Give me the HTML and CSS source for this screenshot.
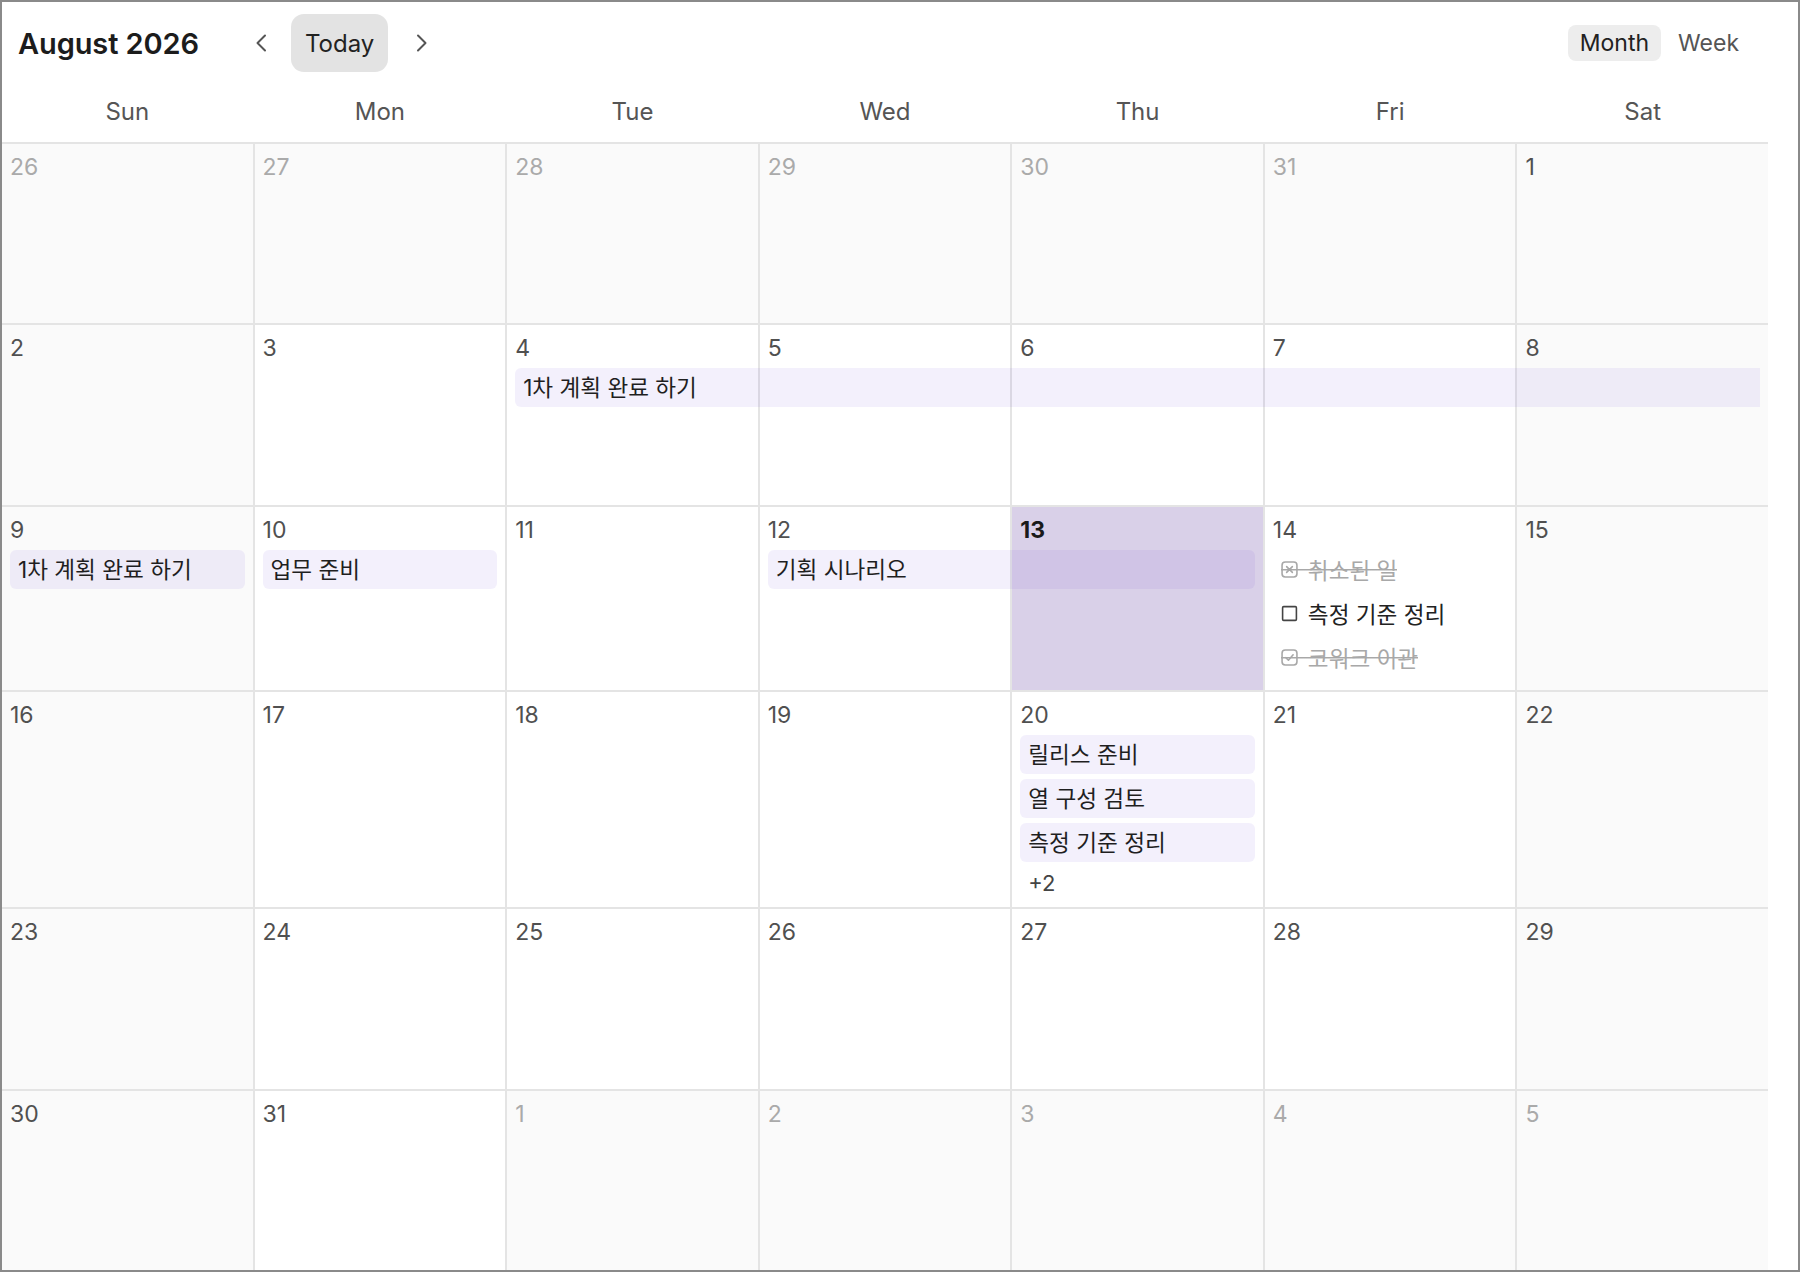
FILE: index.html
```html
<!DOCTYPE html>
<html lang="ko">
<head>
<meta charset="utf-8">
<title>August 2026</title>
<link rel="stylesheet" href="styles.css">
</head>
<body>
<div class="app">
  <header class="toolbar">
    <h1 class="title">August 2026</h1>
    <nav class="nav">
      <button class="icon-btn" aria-label="Previous month">
        <svg width="12" height="18" viewBox="0 0 12 18"><polyline points="10,1.5 2.5,9 10,16.5" fill="none" stroke="#555" stroke-width="2" stroke-linecap="round" stroke-linejoin="round"/></svg>
      </button>
      <button class="today-btn">Today</button>
      <button class="icon-btn" aria-label="Next month">
        <svg width="12" height="18" viewBox="0 0 12 18"><polyline points="2,1.5 9.5,9 2,16.5" fill="none" stroke="#555" stroke-width="2" stroke-linecap="round" stroke-linejoin="round"/></svg>
      </button>
    </nav>
    <div class="views">
      <button class="view active">Month</button>
      <button class="view">Week</button>
    </div>
  </header>

  <div class="calendar">
    <div class="weekdays">
      <div>Sun</div><div>Mon</div><div>Tue</div><div>Wed</div><div>Thu</div><div>Fri</div><div>Sat</div>
    </div>

    <div class="weeks">
      <div class="week">
        <div class="day off"><span class="num">26</span></div>
        <div class="day off"><span class="num">27</span></div>
        <div class="day off"><span class="num">28</span></div>
        <div class="day off"><span class="num">29</span></div>
        <div class="day off"><span class="num">30</span></div>
        <div class="day off"><span class="num">31</span></div>
        <div class="day weekend"><span class="num">1</span></div>
      </div>

      <div class="week">
        <div class="day weekend"><span class="num">2</span></div>
        <div class="day"><span class="num">3</span></div>
        <div class="day"><span class="num">4</span></div>
        <div class="day"><span class="num">5</span></div>
        <div class="day"><span class="num">6</span></div>
        <div class="day"><span class="num">7</span></div>
        <div class="day weekend"><span class="num">8</span></div>
        <div class="event c3 s5 r2 open-end">1차 계획 완료 하기</div>
      </div>

      <div class="week">
        <div class="day weekend"><span class="num">9</span></div>
        <div class="day"><span class="num">10</span></div>
        <div class="day"><span class="num">11</span></div>
        <div class="day"><span class="num">12</span></div>
        <div class="day today"><span class="num">13</span></div>
        <div class="day"><span class="num">14</span></div>
        <div class="day weekend"><span class="num">15</span></div>
        <div class="event c1 r2">1차 계획 완료 하기</div>
        <div class="event c2 r2">업무 준비</div>
        <div class="event c4 s2 r2">기획 시나리오</div>
        <div class="task c6 r2 done">
          <span class="task-line">
            <svg class="box" width="17" height="17" viewBox="0 0 16 16"><rect x="1" y="1" width="14" height="14" rx="3" fill="none" stroke="#a8a8a8" stroke-width="1.5"/><path d="M5.3 5.3 L10.7 10.7 M10.7 5.3 L5.3 10.7" stroke="#a8a8a8" stroke-width="1.5" stroke-linecap="round"/></svg>
            <span class="label">취소된 일</span>
          </span>
        </div>
        <div class="task c6 r3">
          <span class="task-line">
            <svg class="box" width="17" height="17" viewBox="0 0 16 16"><rect x="1.5" y="1.5" width="13" height="13" rx="1" fill="none" stroke="#444" stroke-width="1.5"/></svg>
            <span class="label">측정 기준 정리</span>
          </span>
        </div>
        <div class="task c6 r4 done">
          <span class="task-line">
            <svg class="box" width="17" height="17" viewBox="0 0 16 16"><rect x="1" y="1" width="14" height="14" rx="3" fill="none" stroke="#a8a8a8" stroke-width="1.5"/><path d="M4.6 8.2 L7 10.6 L11.4 5.4" fill="none" stroke="#a8a8a8" stroke-width="1.5" stroke-linecap="round" stroke-linejoin="round"/></svg>
            <span class="label">코워크 이관</span>
          </span>
        </div>
      </div>

      <div class="week">
        <div class="day weekend"><span class="num">16</span></div>
        <div class="day"><span class="num">17</span></div>
        <div class="day"><span class="num">18</span></div>
        <div class="day"><span class="num">19</span></div>
        <div class="day"><span class="num">20</span></div>
        <div class="day"><span class="num">21</span></div>
        <div class="day weekend"><span class="num">22</span></div>
        <div class="event c5 r2">릴리스 준비</div>
        <div class="event c5 r3">열 구성 검토</div>
        <div class="event c5 r4">측정 기준 정리</div>
        <div class="more c5 r5">+2</div>
      </div>

      <div class="week">
        <div class="day weekend"><span class="num">23</span></div>
        <div class="day"><span class="num">24</span></div>
        <div class="day"><span class="num">25</span></div>
        <div class="day"><span class="num">26</span></div>
        <div class="day"><span class="num">27</span></div>
        <div class="day"><span class="num">28</span></div>
        <div class="day weekend"><span class="num">29</span></div>
      </div>

      <div class="week">
        <div class="day weekend"><span class="num">30</span></div>
        <div class="day"><span class="num">31</span></div>
        <div class="day off"><span class="num">1</span></div>
        <div class="day off"><span class="num">2</span></div>
        <div class="day off"><span class="num">3</span></div>
        <div class="day off"><span class="num">4</span></div>
        <div class="day off"><span class="num">5</span></div>
      </div>
    </div>
  </div>
</div>
</body>
</html>
```

FILE: styles.css
```css
* { box-sizing: border-box; }

html, body {
  margin: 0;
  padding: 0;
  background: #fff;
}

body {
  font-family: Inter, "Noto Sans CJK KR", sans-serif;
  color: #222;
}

button {
  font-family: inherit;
  border: 0;
  background: none;
  padding: 0;
  cursor: pointer;
  color: inherit;
}

.app {
  width: 1800px;
  height: 1272px;
  border: 2px solid #8a8a8a;
  display: flex;
  flex-direction: column;
  background: #fff;
}

/* Toolbar */
.toolbar {
  height: 82px;
  flex: none;
  display: flex;
  align-items: center;
  padding: 0 47px 0 16px;
}

.title {
  margin: 0;
  font-size: 29px;
  font-weight: 560;
  letter-spacing: -0.1px;
  color: #1c1c1c;
}

.nav {
  display: flex;
  align-items: center;
  margin-left: 44px;
}

.icon-btn {
  width: 36px;
  height: 40px;
  display: flex;
  align-items: center;
  justify-content: center;
}

.today-btn {
  margin: 0 16px 0 12px;
  height: 58px;
  padding: 0 14px;
  border-radius: 13px;
  background: #e3e3e3;
  font-size: 24px;
  color: #222;
}

.views {
  margin-left: auto;
  display: flex;
  gap: 5px;
}

.view {
  height: 36px;
  padding: 0 12px;
  border-radius: 8px;
  font-size: 23px;
  color: #555;
}

.view.active {
  background: #ededed;
  color: #222;
}

/* Calendar */
.calendar {
  flex: 1;
  display: flex;
  flex-direction: column;
  width: 1766px;
}

.weekdays {
  height: 58px;
  flex: none;
  display: grid;
  grid-template-columns: repeat(7, 1fr);
  column-gap: 2px;
  align-items: center;
  text-align: center;
  font-size: 24px;
  color: #555;
  padding-bottom: 4px;
}

.weeks {
  flex: 1;
  display: flex;
  flex-direction: column;
}

.week {
  flex: 1 1 auto;
  min-height: 181px;
  border-top: 2px solid #e4e4e4;
  background: #e4e4e4;
  display: grid;
  grid-template-columns: repeat(7, 1fr);
  grid-template-rows: 43px repeat(4, auto) minmax(8px, 1fr);
  column-gap: 2px;
}

.day {
  grid-row: 1 / -1;
  background: #fff;
  padding: 9px 8px 8px;
}

.day:nth-child(1) { grid-column: 1; }
.day:nth-child(2) { grid-column: 2; }
.day:nth-child(3) { grid-column: 3; }
.day:nth-child(4) { grid-column: 4; }
.day:nth-child(5) { grid-column: 5; }
.day:nth-child(6) { grid-column: 6; }
.day:nth-child(7) { grid-column: 7; }

.day.weekend,
.day.off {
  background: #fafafa;
}

.day.today {
  background: #d9d0e8;
}

.num {
  display: block;
  font-size: 23px;
  line-height: 28px;
  color: #505050;
}

.day.off .num { color: #aaa; }

.day.today .num {
  font-weight: 700;
  color: #1a1a1a;
}

/* Placement helpers */
.c1 { grid-column-start: 1; }
.c2 { grid-column-start: 2; }
.c3 { grid-column-start: 3; }
.c4 { grid-column-start: 4; }
.c5 { grid-column-start: 5; }
.c6 { grid-column-start: 6; }
.c7 { grid-column-start: 7; }
.s2 { grid-column-end: span 2; }
.s5 { grid-column-end: span 5; }
.r2 { grid-row: 2; }
.r3 { grid-row: 3; }
.r4 { grid-row: 4; }
.r5 { grid-row: 5; }

.event {
  height: 39px;
  margin: 0 8px 5px;
  padding: 0 8px;
  border-radius: 6px;
  background: rgba(103, 65, 217, 0.08);
  font-size: 22.6px;
  line-height: 39px;
  color: #1f1f1f;
  white-space: nowrap;
  overflow: hidden;
}

.event.open-end {
  border-radius: 6px 0 0 6px;
}

.task {
  height: 39px;
  margin: 0 8px 5px;
  padding-left: 8px;
  display: flex;
  align-items: center;
  font-size: 22.6px;
  color: #222;
  white-space: nowrap;
}

.task-line {
  display: inline-flex;
  align-items: center;
  gap: 10px;
}

.task.done .task-line {
  color: #a8a8a8;
  background: linear-gradient(#a8a8a8, #a8a8a8) no-repeat 0 52% / 100% 1.5px;
}

.box {
  flex: none;
  display: block;
}

.more {
  margin: 0 8px;
  padding: 0 8px;
  font-size: 22px;
  line-height: 32px;
  color: #444;
}
```
